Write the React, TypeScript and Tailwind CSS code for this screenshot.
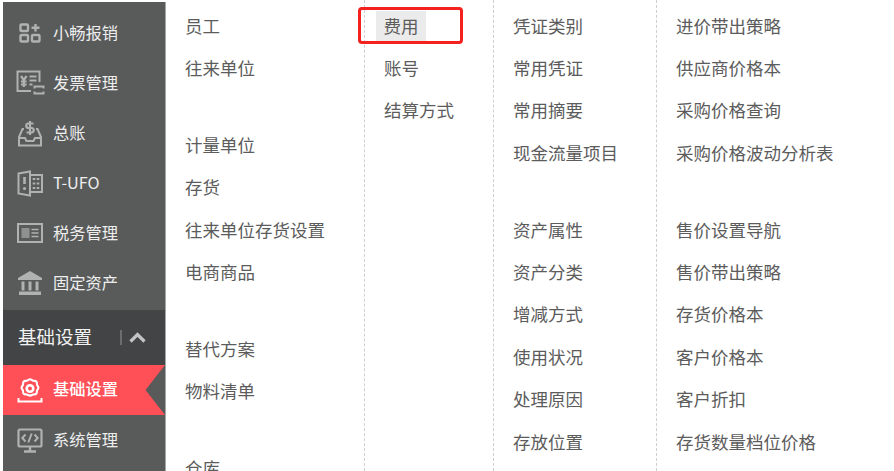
import React from 'react';

const AppsIcon = () => (
  <svg width="22" height="20" viewBox="0 0 22 20" fill="none" stroke="#b0b1b1" strokeWidth="2.400">
    <rect x="1.500" y="1.500" width="7.500" height="6.500" rx="1" />
    <rect x="1.500" y="12" width="7.500" height="6.500" rx="1" />
    <rect x="13" y="12" width="7.500" height="6.500" rx="1" />
    <path d="M16.500 1v7.500M12.500 4.700h8" />
  </svg>
);

const InvoiceIcon = () => (
  <svg width="29" height="26" viewBox="0 0 29 26" fill="none" stroke="#b0b1b1" strokeWidth="2">
    <path d="M15 21H1.500V1.500h22V12" />
    <path d="M5 6l2.800 4 2.800-4M7.800 10v7M5 11.500h5.600M5 14.500h5.600" strokeWidth="2.200" />
    <path d="M13.500 6.500h7M13.500 10.500h7M13.500 14.500h3" strokeWidth="1.800" />
    <path d="M18.500 18.500v-2h9v2M27.500 21.500v2h-9v-2" />
  </svg>
);

const LedgerIcon = () => (
  <svg width="26" height="27" viewBox="0 0 26 27" fill="none" stroke="#b0b1b1" strokeWidth="2">
    <path d="M7 9H5.500L2 17v8.500h22V17l-3.500-8H19" />
    <path d="M2 18h6l1.500 3h7L18 18h6" />
    <path d="M16.500 3.500h-5a2.200 2.200 0 0 0 0 4.500h3a2.200 2.200 0 0 1 0 4.500h-5M13 1v14" strokeWidth="2.200" />
  </svg>
);

const BuildingIcon = () => (
  <svg width="26" height="27" viewBox="0 0 26 27" fill="none" stroke="#b0b1b1" strokeWidth="2">
    <path d="M1.500 3.500L13 1.500v24l-11.500-2z" />
    <path d="M13 5h12v17H13" />
    <path d="M17 8v2M21 8v2M17 12.500v2M21 12.500v2M17 17v2M21 17v2" strokeWidth="2.600" />
    <path d="M7.500 7v7" strokeWidth="2.600" />
    <circle cx="7.500" cy="18.500" r="1.600" fill="#b0b1b1" stroke="none" />
  </svg>
);

const TaxIcon = () => (
  <svg width="26" height="20" viewBox="0 0 26 20" fill="none" stroke="#b0b1b1" strokeWidth="2">
    <rect x="1" y="1" width="24" height="18" />
    <rect x="4.500" y="5" width="8" height="10" fill="#8f9090" stroke="none" />
    <path d="M14.500 6.500h7M14.500 10h7M14.500 13.500h7" strokeWidth="1.600" />
  </svg>
);

const BankIcon = () => (
  <svg width="26" height="26" viewBox="0 0 26 26" fill="#b0b1b1">
    <path d="M13 1L25 8v2H1V8z" />
    <rect x="4.500" y="11.500" width="3" height="9" />
    <rect x="11.500" y="11.500" width="3" height="9" />
    <rect x="18.500" y="11.500" width="3" height="9" />
    <rect x="2" y="21.500" width="22" height="3.500" />
  </svg>
);

const GearIcon = () => (
  <svg width="26" height="25" viewBox="0 0 26 25" fill="none" stroke="#ffffff" strokeWidth="2.600">
    <path d="M13 1.500c2 0 2.500 1.500 4 1.800 1.500.3 3-.3 4 1 1 1.300.3 2.600.8 3.900.5 1.300 1.700 1.800 1.700 3.300s-1.200 2-1.700 3.300c-.5 1.300.2 2.600-.8 3.900-1 1.300-2.500.7-4 1-1.500.3-2 1.300-4 1.300s-2.500-1-4-1.300c-1.500-.3-3 .3-4-1-1-1.300-.3-2.600-.8-3.900-.5-1.300-1.700-1.800-1.700-3.300s1.200-2 1.700-3.300c.5-1.300-.2-2.600.8-3.900 1-1.300 2.500-.7 4-1 1.500-.3 2-1.800 4-1.800z" transform="translate(2.600 0) scale(.8 .84)" />
    <circle cx="13" cy="10.500" r="3.300" />
    <path d="M1.500 20v3.500h23V20" strokeWidth="2" />
  </svg>
);

const MonitorIcon = () => (
  <svg width="26" height="25" viewBox="0 0 26 25" fill="none" stroke="#b0b1b1" strokeWidth="2.200">
    <rect x="1.500" y="1.500" width="23" height="17" rx="1.500" />
    <path d="M8.500 6.500l-3.200 3.500 3.200 3.500M17.500 6.500l3.200 3.500-3.200 3.500M14.700 5.500l-3.400 9" strokeWidth="2" />
    <path d="M13 18.500V23M7 23.500h12" strokeWidth="2.400" />
  </svg>
);

const navTop = [
  { label: '小畅报销', icon: <AppsIcon /> },
  { label: '发票管理', icon: <InvoiceIcon /> },
  { label: '总账', icon: <LedgerIcon /> },
  { label: 'T-UFO', icon: <BuildingIcon /> },
  { label: '税务管理', icon: <TaxIcon /> },
  { label: '固定资产', icon: <BankIcon /> },
];

const NavRow: React.FC<{ label: string; icon: React.ReactNode }> = ({ label, icon }) => (
  <div className="flex h-[50px] items-center">
    <div className="flex w-[50px] shrink-0 justify-center pl-[4px]">{icon}</div>
    <span className="mb-[2px] text-[16.250px] text-[#eeeeee]">{label}</span>
  </div>
);

const Sidebar = () => (
  <aside className="mt-[2px] ml-[3px] h-[469px] w-[163px] shrink-0 overflow-hidden border-r border-[#a5a6a6] bg-[#595b5b] pt-[6px]">
    {navTop.map(item => (
      <NavRow key={item.label} label={item.label} icon={item.icon} />
    ))}
    <div className="mt-[2px] flex h-[55px] items-center bg-[#434445] pl-[15px]">
      <span className="mb-[2px] text-[18.500px] text-[#f2f2f2]">基础设置</span>
      <span className="ml-[28px] h-[15px] w-[2px] bg-[#6c6d6e]" />
      <svg className="ml-[7px]" width="17" height="11" viewBox="0 0 17 11" fill="none" stroke="#c4c4c4" strokeWidth="3.200">
        <path d="M1.500 9.500l7-7 7 7" />
      </svg>
    </div>
    <div className="flex h-[50px] items-center bg-[#ff4f57] [clip-path:polygon(0_0,100%_0,88%_50%,100%_100%,0_100%)]">
      <div className="flex w-[50px] shrink-0 justify-center pl-[4px]">
        <GearIcon />
      </div>
      <span className="mb-[3px] text-[16.250px] font-medium text-white">基础设置</span>
    </div>
    <NavRow label="系统管理" icon={<MonitorIcon />} />
  </aside>
);

const Group: React.FC<{ items: string[] }> = ({ items }) => (
  <ul className="mb-[34.500px]">
    {items.map(text => (
      <li key={text} className="flex h-[42.400px] items-center">
        {text === '费用' ? (
          <span className="ml-[-8px] flex h-[30px] w-[50px] items-center justify-center bg-[#ebebeb]">{text}</span>
        ) : (
          text
        )}
      </li>
    ))}
  </ul>
);

const columns = [
  {
    width: 'w-[198px]',
    border: '',
    groups: [
      ['员工', '往来单位'],
      ['计量单位', '存货', '往来单位存货设置', '电商商品'],
      ['替代方案', '物料清单'],
      ['仓库'],
    ],
  },
  {
    width: 'w-[129px]',
    border: 'border-l border-dashed border-[#cfcfcf]',
    groups: [['费用', '账号', '结算方式']],
  },
  {
    width: 'w-[163px]',
    border: 'border-l border-dashed border-[#cfcfcf]',
    groups: [
      ['凭证类别', '常用凭证', '常用摘要', '现金流量项目'],
      ['资产属性', '资产分类', '增减方式', '使用状况', '处理原因', '存放位置'],
    ],
  },
  {
    width: 'w-[237px]',
    border: 'border-l border-dashed border-[#cfcfcf]',
    groups: [
      ['进价带出策略', '供应商价格本', '采购价格查询', '采购价格波动分析表'],
      ['售价设置导航', '售价带出策略', '存货价格本', '客户价格本', '客户折扣', '存货数量档位价格'],
    ],
  },
];

export default function App() {
  return (
    <div className="relative flex h-[471px] w-[894px] overflow-hidden bg-white font-['Noto_Sans_CJK_SC','Liberation_Sans',sans-serif] text-[17.500px] text-[#5c5c5c]">
      <Sidebar />
      <div className="flex flex-1 overflow-hidden">
        {columns.map((col, i) => (
          <div key={i} className={`${col.width} ${col.border} h-[471px] shrink-0 overflow-hidden pt-[4.500px] pl-[19px]`}>
            {col.groups.map((g, j) => (
              <Group key={j} items={g} />
            ))}
          </div>
        ))}
      </div>
      {/* red highlight round the 费用 entry */}
      <div className="absolute top-[7px] left-[358px] h-[37px] w-[105px] rounded-[4px] border-[3px] border-[#f5211f]" />
    </div>
  );
}
